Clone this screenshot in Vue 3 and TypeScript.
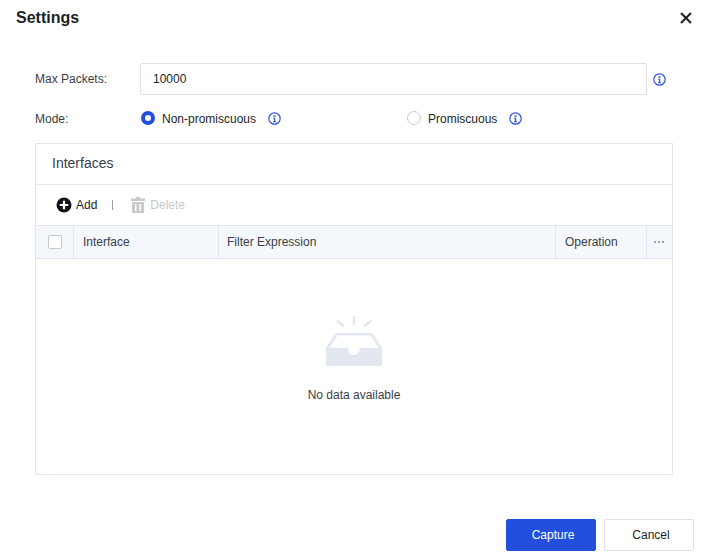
<script setup lang="ts">
const columns = [
  { key: 'interface', label: 'Interface' },
  { key: 'filter', label: 'Filter Expression' },
  { key: 'operation', label: 'Operation' },
]
const modes = [
  { key: 'non', label: 'Non-promiscuous', checked: true },
  { key: 'pro', label: 'Promiscuous', checked: false },
]
</script>

<template>
  <div class="dialog">
    <header class="dialog-head">
      <h1 class="title">Settings</h1>
      <svg class="close" width="12" height="12" viewBox="0 0 12 12" aria-hidden="true">
        <path d="M1 1l10 10M11 1L1 11" stroke="#1c1f26" stroke-width="2" fill="none" />
      </svg>
    </header>

    <div class="form">
      <div class="form-row form-row--input">
        <label class="label">Max Packets:</label>
        <div class="input">10000</div>
        <svg class="info info--input" width="13" height="13" viewBox="0 0 13 13" aria-hidden="true">
          <circle cx="6.5" cy="6.500" r="5.700" fill="none" stroke="#2f52dc" stroke-width="1.200" />
          <path d="M5.300 3.500h2.400v1.300H5.300zM5.200 5.700h2v3.500h.8v1H5v-1h.9V6.700h-.7z" fill="#2f52dc" />
        </svg>
      </div>
      <div class="form-row form-row--mode">
        <label class="label label--mode">Mode:</label>
        <div class="modes">
          <div v-for="m in modes" :key="m.key" class="mode">
            <span class="radio" :class="{ 'radio--on': m.checked }" />
            <span class="mode-text">{{ m.label }}</span>
            <svg class="info" width="13" height="13" viewBox="0 0 13 13" aria-hidden="true">
              <circle cx="6.5" cy="6.500" r="5.700" fill="none" stroke="#2f52dc" stroke-width="1.200" />
              <path d="M5.300 3.500h2.400v1.300H5.300zM5.200 5.700h2v3.500h.8v1H5v-1h.9V6.700h-.7z" fill="#2f52dc" />
            </svg>
          </div>
        </div>
      </div>
    </div>

    <section class="panel">
      <div class="panel-title">Interfaces</div>
      <div class="toolbar">
        <span class="tool">
          <svg width="16" height="16" viewBox="0 0 16 16" aria-hidden="true">
            <circle cx="8" cy="8" r="7.500" fill="#11141a" />
            <path d="M8 3.800v8.400M3.800 8h8.400" stroke="#fff" stroke-width="2.200" />
          </svg>
          Add
        </span>
        <span class="sep" />
        <span class="tool tool--off">
          <svg width="14" height="16" viewBox="0 0 14 16" aria-hidden="true">
            <path d="M5 0h4v1.500h5V4H0V1.500h5z" fill="#c9c9c9" />
            <path d="M1 5h12v11H1zM4 7v7h1.500V7zM8.500 7v7H10V7z" fill="#c9c9c9" fill-rule="evenodd" />
          </svg>
          Delete
        </span>
      </div>
      <div class="table-head">
        <div class="cell cell--check"><span class="checkbox" /></div>
        <div v-for="c in columns" :key="c.key" class="cell" :class="`cell--${c.key}`">{{ c.label }}</div>
        <div class="cell cell--more">
          <svg width="10" height="2" viewBox="0 0 10 2" aria-hidden="true">
            <path d="M0 0h2v2H0zM4 0h2v2H4zM8 0h2v2H8z" fill="#9ea2aa" />
          </svg>
        </div>
      </div>
      <div class="empty">
        <svg width="58" height="50" viewBox="0 0 58 50" aria-hidden="true">
          <path d="M12.500 5l5.500 4.700M29 1.500V8M45.500 5L40 9.700" stroke="#e2e7f0" stroke-width="2.600" stroke-linecap="round" fill="none" />
          <path
            d="M12 17h34q1.500 0 2.500 1.500L57 32v15.500q0 2.500-2.500 2.500h-51Q1 50 1 47.500V32l8.500-13.500Q10.500 17 12 17zM12.500 19.500L4.500 31.700h17.400q.8 0 1.100 1 1.300 6.300 6 6.300t6-6.300q.3-1 1.100-1h17.400l-8-12.200z"
            fill="#e2e7f0"
            fill-rule="evenodd"
          />
        </svg>
        <p class="empty-text">No data available</p>
      </div>
    </section>

    <footer class="dialog-foot">
      <button class="btn btn--primary">Capture</button>
      <button class="btn">Cancel</button>
    </footer>
  </div>
</template>

<style>
html,
body {
  margin: 0;
  background: #fff;
}
</style>

<style scoped>
.dialog {
  width: 711px;
  height: 559px;
  box-sizing: border-box;
  overflow: hidden;
  display: flex;
  flex-direction: column;
  font-family: 'Liberation Sans', Arial, sans-serif;
  font-size: 12px;
  color: #1c1f26;
  background: #fff;
}

.dialog-head {
  display: flex;
  align-items: center;
  justify-content: space-between;
  height: 36px;
  padding: 0 19px 0 16px;
}

.title {
  margin: 0;
  font-size: 16px;
  font-weight: 700;
}

.close {
  display: block;
}

.form {
  padding: 27px 0 0 35px;
}

.form-row {
  display: flex;
  align-items: center;
}

.form-row--input {
  height: 32px;
}

.form-row--mode {
  height: 22px;
  margin-top: 12px;
}

.label {
  width: 105px;
  flex: none;
  color: #3a3e48;
}

.label--mode {
  padding-top: 2px;
}

.input {
  width: 507px;
  height: 32px;
  box-sizing: border-box;
  flex: none;
  padding-left: 12px;
  line-height: 30px;
  border: 1px solid #dfe1e6;
  border-radius: 2px;
}

.info {
  display: block;
  flex: none;
}

.info--input {
  margin-left: 6px;
}

.modes {
  display: grid;
  grid-template-columns: 266px auto;
  padding-left: 1px;
}

.mode {
  display: flex;
  align-items: center;
}

.radio {
  width: 14px;
  height: 14px;
  box-sizing: border-box;
  border: 1px solid #c8c9cc;
  border-radius: 50%;
}

.radio--on {
  border: 4px solid #2250dc;
}

.mode-text {
  margin: 0 12px 0 7px;
  padding-top: 2px;
}

.panel {
  margin: 14px 38px 0 35px;
  height: 332px;
  box-sizing: border-box;
  display: flex;
  flex-direction: column;
  border: 1px solid #e2e6f0;
}

.panel-title {
  height: 40px;
  flex: none;
  padding-left: 16px;
  line-height: 39px;
  font-size: 14px;
  color: #3a3e48;
  border-bottom: 1px solid #e2e6f0;
}

.toolbar {
  display: flex;
  align-items: center;
  height: 40px;
  flex: none;
  padding-left: 20px;
}

.tool {
  display: flex;
  align-items: center;
  gap: 4px;
}

.tool--off {
  gap: 5px;
  color: #c9c9c9;
}

.sep {
  width: 1px;
  height: 10px;
  margin: 0 18px 0 15px;
  background: #9a9ea8;
}

.table-head {
  display: flex;
  height: 34px;
  flex: none;
  box-sizing: border-box;
  background: #f4f7fb;
  border-top: 1px solid #e2e6f0;
  border-bottom: 1px solid #e2e6f0;
}

.cell {
  display: flex;
  align-items: center;
  box-sizing: border-box;
  padding-left: 8px;
  color: #3a3e48;
  border-right: 1px solid #e2e6f0;
}

.cell--check {
  width: 38px;
  padding-left: 12px;
}

.cell--interface {
  width: 145px;
  padding-left: 9px;
}

.cell--filter {
  width: 337px;
}

.cell--operation {
  width: 91px;
  padding-left: 9px;
}

.cell--more {
  flex: 1;
  padding-left: 7px;
  border-right: none;
}

.checkbox {
  width: 14px;
  height: 14px;
  box-sizing: border-box;
  background: #fff;
  border: 1px solid #c8c9cc;
  border-radius: 2px;
}

.empty {
  flex: 1;
  display: flex;
  flex-direction: column;
  align-items: center;
  padding-top: 57px;
}

.empty svg {
  display: block;
}

.empty-text {
  margin: 22px 0 0;
  color: #3a3e48;
}

.dialog-foot {
  display: flex;
  justify-content: flex-end;
  gap: 8px;
  margin-top: 44px;
  padding-right: 17px;
}

.btn {
  width: 90px;
  height: 32px;
  padding: 0 0 0 4px;
  font: inherit;
  color: #1c1f26;
  background: #fff;
  border: 1px solid #dfe1e6;
  border-radius: 2px;
}

.btn--primary {
  color: #fff;
  background: #2250dc;
  border-color: #2250dc;
}
</style>
